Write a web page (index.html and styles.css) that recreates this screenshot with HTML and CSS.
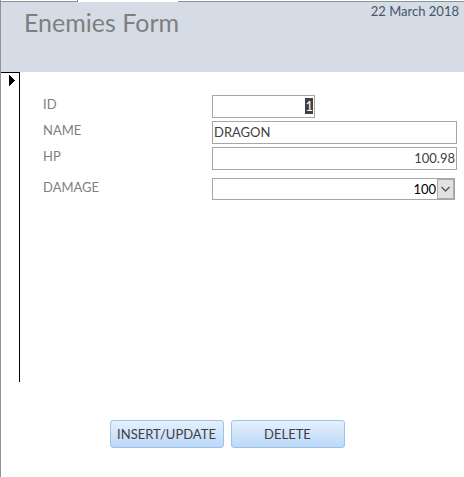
FILE: index.html
```html
<!DOCTYPE html>
<html lang="en">
<head>
<meta charset="utf-8">
<title>Enemies Form</title>
<link rel="stylesheet" href="styles.css">
</head>
<body>
<div class="window">
  <div class="tabs"><span class="tab"></span><span class="tab active"></span><span class="tab rest"></span></div>
  <header class="header">
    <h1>Enemies Form</h1>
    <time datetime="2018-03-22">22 March 2018</time>
  </header>
  <main class="detail">
    <div class="selector">
      <svg width="6" height="11" viewBox="0 0 6 11" shape-rendering="crispEdges" aria-hidden="true"><path d="M0 0h1v1h1v1h1v1h1v1h1v1h1v1h-1v1h-1v1h-1v1h-1v1h-1v1h-1z"/></svg>
    </div>
    <form class="fields" id="enemy">
      <label for="id">ID</label>
      <input class="short number" id="id" type="text" value="1" autofocus>
      <label for="name">NAME</label>
      <input id="name" type="text" value="DRAGON">
      <label for="hp">HP</label>
      <input class="number" id="hp" type="text" value="100.98">
      <label class="last" for="damage">DAMAGE</label>
      <div class="combo last">
        <select id="damage"><option>100</option></select>
        <svg class="arrow" width="17" height="20" viewBox="0 0 17 20" aria-hidden="true"><rect x=".5" y=".5" width="16" height="19" fill="#e1e1e1" stroke="#ababab"/><path d="M4.5 8l4 4 4-4" fill="none" stroke="#555" stroke-width="1.3"/></svg>
      </div>
    </form>
  </main>
  <footer class="actions">
    <button type="submit" form="enemy">INSERT/UPDATE</button>
    <button type="button">DELETE</button>
  </footer>
</div>
<script src="script.js"></script>
</body>
</html>
```
FILE: styles.css
```css
* { box-sizing: border-box; }
body {
  margin: 0;
  background: #fff;
  color: #404040;
  font: 13px/18px Lato, "Open Sans", sans-serif;
}
.window {
  display: flex;
  flex-direction: column;
  min-height: 100vh;
  border-left: 1px solid #8f95a0;
}
.tabs { display: flex; height: 2px; }
.tab { width: 77px; border-right: 1px solid #8c8c84; border-bottom: 1px solid #8b9496; }
.tab.active { width: 100px; border-color: #fff; background: #fff; }
.tab.rest { flex: 1; border-right: 0; }
.header {
  display: flex;
  justify-content: space-between;
  height: 70px;
  padding: 0 5px 0 23px;
  background: #d6dce5;
}
h1 {
  margin: 5px 0 0;
  color: #7f7f7f;
  font-size: 25px;
  line-height: 30px;
  font-weight: 400;
}
time { color: #44546a; }
.detail { display: flex; min-height: 310px; }
.selector {
  width: 19px;
  padding: 2px 0 0 8px;
  border-top: 1px solid #000;
  border-right: 1px solid #000;
}
.selector svg { display: block; }
.fields {
  flex: 1;
  display: grid;
  grid-template-columns: 169px 1fr;
  row-gap: 3px;
  align-content: start;
  padding: 23px 7px 0 23px;
}
label { color: #7f7f7f; }
input, select {
  width: 100%;
  height: 23px;
  margin: 0;
  padding: 0 1px 1px;
  border: 1px solid #a6a6a6;
  border-radius: 0;
  outline: 0;
  background: #fff;
  color: #404040;
  font: inherit;
  line-height: 20px;
}
.short { width: 103px; }
.number { text-align: right; }
input::selection { background: #404040; color: #fff; }
.last { margin-top: 5px; }
.combo { position: relative; margin-right: 2px; }
select {
  display: block;
  height: 22px;
  padding: 0 18px 0 1px;
  appearance: none;
  color: #000;
  text-align-last: right;
}
.arrow { position: absolute; top: 1px; right: 1px; pointer-events: none; }
.actions {
  display: flex;
  justify-content: center;
  gap: 7px;
  padding: 38px 11px 0 0;
}
button {
  width: 114px;
  height: 28px;
  padding: 0;
  border: 1px solid #9dc3e6;
  border-radius: 3px;
  background: linear-gradient(#e6f0fd, #bbd8f8);
  color: #404040;
  font: inherit;
}
```
FILE: script.js
```js
const first = document.getElementById("id");
first.focus();
first.select();
```
